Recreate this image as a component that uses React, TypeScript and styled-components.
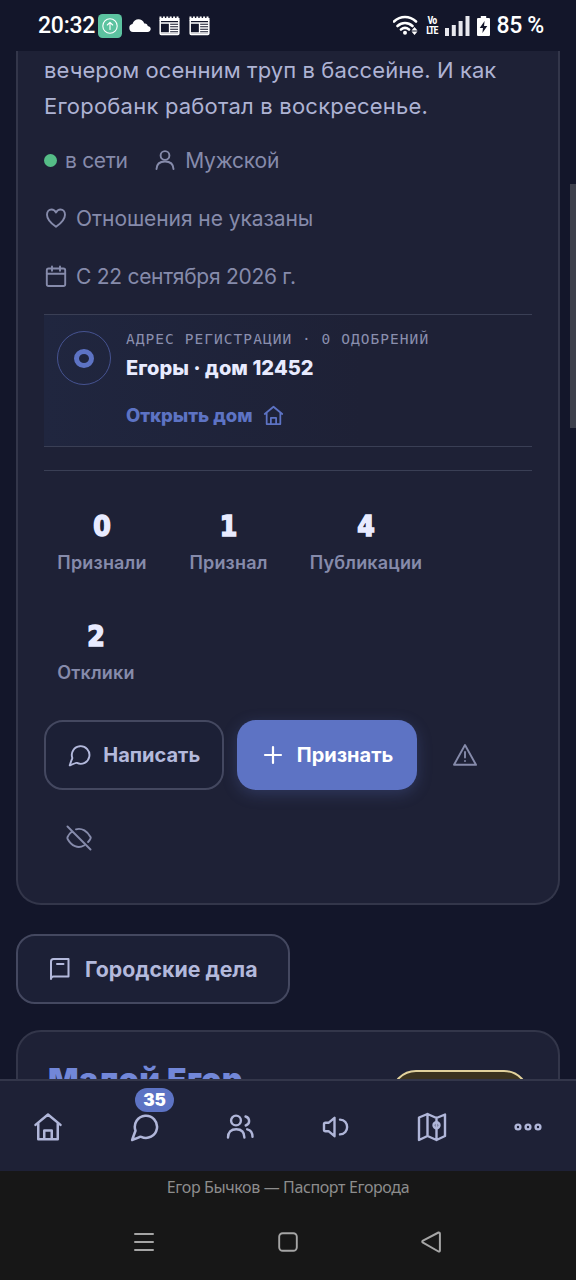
import React from 'react';
import styled, { createGlobalStyle } from 'styled-components';

const GlobalStyle = createGlobalStyle`
  * { box-sizing: border-box; }
  body { margin: 0; background: #13162a; font-family: Inter, "Noto Sans", sans-serif; }
  p, h2 { margin: 0; }
`;

const Screen = styled.div`
  width: 576px; height: 1280px; overflow: hidden;
  display: flex; flex-direction: column;
  background: #13162a; color: #aeb4d6;
  position: relative;
`;
const StatusBar = styled.header`
  height: 51px; flex: none; padding: 0 32px 0 38px;
  display: flex; align-items: center; justify-content: space-between;
  color: #fff; font: 500 23px/50px Roboto, sans-serif;
`;
const StatusGroup = styled.div<{ $gap: number }>`
  display: flex; align-items: center; gap: ${p => p.$gap}px; white-space: nowrap; height: 50px;
`;
const Clock = styled.span`letter-spacing: -0.25px; width: 58px;`;
const Percent = styled.span`letter-spacing: -0.3px;`;
const Feed = styled.main`
  flex: none; height: 1028px; padding: 0 16px; overflow: hidden;
  display: flex; flex-direction: column; align-items: flex-start;
`;
const ProfileCard = styled.section`
  width: 544px; height: 854px; flex: none;
  padding: 1px 26px 29px; background: #1e2136;
  border: 2px solid #33364a; border-top: 0; border-radius: 0 0 25px 25px;
`;
const Bio = styled.p`
  font-size: 22px; line-height: 36px; color: #aeb3d4; white-space: nowrap;
`;
const Line = styled.span<{ $ls: number }>`display: block; letter-spacing: ${p => p.$ls}px;`;
const MetaList = styled.div`
  margin-top: 22px; display: flex; flex-wrap: wrap; column-gap: 27px; row-gap: 30px;
`;
const MetaItem = styled.div<{ $gap?: number; $ls?: number }>`
  height: 28px; display: flex; align-items: center; gap: ${p => p.$gap ?? 8}px;
  font-size: 21px; letter-spacing: ${p => p.$ls ?? 0}px; color: #868bab; white-space: nowrap;
`;
const OnlineDot = styled.i`width: 13px; height: 13px; border-radius: 50%; background: #55bd87;`;
const Address = styled.section`
  margin-top: 24px; width: 488px; height: 133px; padding: 16px 13px;
  display: flex; gap: 15px;
  border-top: 1px solid #3a3f55; border-bottom: 1px solid #3a3f55;
  background: linear-gradient(90deg, #20263f, #1e2136 65%);
`;
const Seal = styled.div`
  width: 54px; height: 54px; flex: none; border: 1.500px solid #465391; border-radius: 50%;
  display: flex; align-items: center; justify-content: center;
`;
const SealRing = styled.i`width: 20px; height: 19px; border: 5px solid #5d73c4; border-radius: 50%;`;
const AddressText = styled.div`display: flex; flex-direction: column; white-space: nowrap;`;
const Caption = styled.span`
  font: 14.5px/16px "DejaVu Sans Mono", monospace; letter-spacing: 1.05px; color: #8a8fae;
`;
const AddressTitle = styled.strong`
  margin-top: 7px; font-size: 20px; line-height: 28px; font-weight: 800; color: #e8ebff; letter-spacing: 0.08px;
`;
const AddressLink = styled.a`
  margin-top: 19px; height: 28px; display: flex; align-items: center; gap: 11px;
  color: #5d73c4; font-size: 18.5px; font-weight: 850; letter-spacing: -0.05px;
`;
const Stats = styled.section`
  margin-top: 23px; padding-top: 31px; width: 488px; height: 226px;
  border-top: 1px solid #3a3f55; display: flex; flex-wrap: wrap; align-content: flex-start; gap: 16px;
`;
const Stat = styled.div<{ $w: number }>`
  width: ${p => p.$w}px; height: 94px; padding-top: 7px; text-align: center; white-space: nowrap;
`;
const StatValue = styled.strong`
  display: block; height: 36px; font: 700 28px/35px "DejaVu Sans Condensed", "DejaVu Sans", sans-serif; color: #e8ebff;
  -webkit-text-stroke: 1.5px #e8ebff;
`;
const StatLabel = styled.span`
  display: block; margin-top: 4px; font-size: 18px; line-height: 28px; font-weight: 600; color: #868bab;
  letter-spacing: 0.18px;
`;
const Actions = styled.div`
  margin-top: 24px; display: flex; flex-wrap: wrap; gap: 13px;
`;
const Button = styled.button<{ $primary?: boolean; $w: number; $gap?: number; $size?: number }>`
  width: ${p => p.$w}px; height: 70px; flex: none; padding: 0; border-radius: 19px;
  border: ${p => (p.$primary ? '0' : '2px solid #444860')};
  background: ${p => (p.$primary ? '#5d73c4' : '#1c2036')};
  box-shadow: ${p => (p.$primary ? '0 4px 15px rgba(93,115,196,.28)' : 'none')};
  color: ${p => (p.$primary ? '#fff' : '#b3b9dc')};
  display: flex; align-items: center; justify-content: center; gap: ${p => p.$gap ?? 12}px;
  font: 700 ${p => p.$size ?? 20}px/28px Inter, sans-serif; white-space: nowrap;
`;
const IconButton = styled.button`
  width: 70px; height: 70px; padding: 0; border: 0; background: none; color: #868bab;
  display: flex; align-items: center; justify-content: center;
`;
const CityRow = styled.div`margin-top: 29px; flex: none;`;
const PostCard = styled.article`
  margin-top: 26px; width: 544px; height: 180px; flex: none; padding: 25px 30px;
  border: 2px solid #33364a; border-radius: 25px; background: #1e2136;
  display: flex; justify-content: space-between; align-items: flex-start;
`;
const Author = styled.h2`
  margin-top: 3px; font-size: 32px; line-height: 40px; font-weight: 900; color: #7287d8; white-space: nowrap; letter-spacing: 0.35px;
`;
const Pill = styled.div`
  width: 138px; height: 60px; margin: 13px -1px 0 0; border: 2px solid #e2d29c; border-radius: 25px; background: #3b3320;
`;
const TabBar = styled.nav`
  height: 92px; flex: none; border-top: 2px solid #33364a; background: #1e2136;
  display: flex; color: #b0b6d9;
`;
const Tab = styled.div`
  position: relative; flex: 1; padding-top: 2px; display: flex; align-items: center; justify-content: center;
`;
const Badge = styled.span`
  position: absolute; left: 39px; top: 7px; width: 39px; height: 24px; border-radius: 12px;
  background: #5d73c4; color: #fff; font-size: 17px; line-height: 24px; font-weight: 900; text-align: center;
`;
const SystemBar = styled.footer`
  height: 109px; flex: none; background: #171717; color: #8d8d8d;
  display: flex; flex-direction: column; align-items: center;
`;
const PageTitle = styled.div`
  height: 34px; font: 16px/33px "Noto Sans", sans-serif; letter-spacing: -0.38px; white-space: nowrap;
`;
const SystemKeys = styled.div`
  width: 432px; height: 74px; display: flex; color: #a5a5a5;
`;
const Key = styled.div`flex: 1; display: flex; align-items: center; justify-content: center;`;
const ScrollThumb = styled.div`
  position: absolute; right: 0; top: 184px; width: 6px; height: 244px; background: #3d404c;
`;

const Svg = styled.svg`display: block; flex: none; fill: none; stroke: currentColor; stroke-linecap: round; stroke-linejoin: round;`;
type IconProps = { size: number; sw?: number };

const HomeIcon = ({ size, sw = 2 }: IconProps) => (
  <Svg width={size} height={size} viewBox="0 0 24 24" strokeWidth={sw}>
    <path d="M2 10.3 12 2l10 8.300M4.200 8.800V21.800h15.600V8.800M9 21.800v-7h6v7" />
  </Svg>
);
const ChatIcon = ({ size, sw = 2 }: IconProps) => (
  <Svg width={size} height={size} viewBox="0 0 24 24" strokeWidth={sw}>
    <path d="M4.500 14.500A9.200 9.200 0 1 1 9.300 19.800C8.500 19.500 8 19.700 7.300 20.100 5.500 21 4 21.500 1.800 22.300c.8-2.500 1.500-4.300 2.200-6.200.3-.7.600-1.100.5-1.600Z" />
  </Svg>
);
const PersonIcon = () => (
  <Svg width="20" height="22" viewBox="0 0 20 22" strokeWidth="1.900">
    <circle cx="10" cy="6.500" r="4.400" /><path d="M1.500 20c.2-5 3.500-7.500 8.500-7.500s8.300 2.500 8.500 7.500" />
  </Svg>
);
const HeartIcon = () => (
  <Svg width="24" height="24" viewBox="0 0 24 24" strokeWidth="1.900">
    <path d="M12 20.800C7 17.300 3 13.200 3 8.700 3 5.600 5 3.500 7.500 3.500c2 0 3.500 1.100 4.500 3 1-1.900 2.500-3 4.500-3C19 3.500 21 5.600 21 8.700c0 4.500-4 8.600-9 12.100Z" />
  </Svg>
);
const CalendarIcon = () => (
  <Svg width="24" height="24" viewBox="0 0 24 24" strokeWidth="1.900">
    <rect x="2.800" y="4.500" width="18.400" height="17.500" rx="1.800" /><path d="M2.800 9.800h18.400M8 2.500V6.800M16 2.500V6.800" />
  </Svg>
);
const PeopleIcon = () => (
  <Svg width="28" height="28" viewBox="0 0 28 28" strokeWidth="2.400">
    <circle cx="10" cy="7.500" r="4.900" />
    <path d="M2 24.500c0-5.500 3-8.300 8.200-8.300s8.200 2.800 8.200 8.300M19.500 3.500c4.800 1.500 4.800 7.500.2 9M21.200 16.300c3.600.8 5.300 3.300 5.300 7.500" />
  </Svg>
);
const SoundIcon = () => (
  <Svg width="28" height="28" viewBox="0 0 28 28" strokeWidth="2.400">
    <path d="M3.500 9.800H6.500L12.500 4.800v18.400L6.500 18.200H3.500Q2 18.200 2 16.700v-5.400Q2 9.800 3.500 9.800ZM18 6.600c9.500 0 9.500 14.800 0 14.800" />
  </Svg>
);
const MapIcon = () => (
  <Svg width="30" height="30" viewBox="0 0 30 30" strokeWidth="2.400">
    <path d="M2 5.500 10.500 2 19.500 6 28 2.500V24L19.500 28 10.500 24 2 28ZM10.500 2v22M19.500 6v22" />
    <circle cx="19.500" cy="13.200" r="3" />
  </Svg>
);
const WarningIcon = () => (
  <Svg width="26" height="26" viewBox="0 0 26 26" strokeWidth="1.900">
    <path d="M13 3 24 22.800H2ZM13 10v5.500M13 19v.1" />
  </Svg>
);
const EyeOffIcon = () => (
  <Svg width="26" height="26" viewBox="0 0 26 26" strokeWidth="1.900">
    <path d="m1.500 1.500 23 23M10 4.300C16 2.500 21.500 6.500 24.500 12c.4.700.2 1.400-.2 2-.5 1-1.300 2-2.200 3M6 6.500c-2 1.500-3.500 3.500-4.400 5.500-.3.700-.3 1.300 0 2C5.500 21 12 24 18 20.500" />
  </Svg>
);
const BookIcon = () => (
  <Svg width="22" height="24" viewBox="0 0 22 24" strokeWidth="2">
    <path d="M3 22V4.500C3 2.800 3.800 2 5.500 2H20.500v17.500H5.500C4 19.500 3 20.200 3 22M9 7h6.500" />
  </Svg>
);

const AppBadgeIcon = () => (
  <Svg width="24" height="24" viewBox="0 0 24 24" strokeWidth="1.100">
    <rect width="24" height="24" rx="4.500" fill="#5cc3a0" stroke="none" />
    <circle cx="12" cy="12" r="7.200" /><path d="M12 15.500v-7M9.300 11 12 8.300l2.700 2.700" />
  </Svg>
);
const CloudIcon = () => (
  <Svg width="22" height="14" viewBox="0 0 22 14">
    <path fill="currentColor" stroke="none" d="M4 13A4 4 0 0 1 3.500 5.100C5-.8 13-1.500 15.300 4.500 17 4 18.600 5.400 18.700 7 23 7.500 22.500 13 18.500 13Z" />
  </Svg>
);
const NewsIcon = () => (
  <Svg width="21" height="20" viewBox="0 0 21 20" strokeWidth="1.500">
    <path strokeLinecap="butt" strokeWidth="2" strokeDasharray="2 1.400" d="M.5 1.500h20" />
    <path fill="currentColor" stroke="none" d="M.5 2h20v3H.5Z" />
    <rect x="1.200" y="4" width="18.600" height="14.500" rx="1" />
    <path d="M2 7h17M11 9.500h8M11 12h8M11 14.500h8M2 17h17M10.500 7v9" strokeWidth="1.300" />
  </Svg>
);
const WifiIcon = () => (
  <Svg width="25" height="21" viewBox="0 0 25 21" strokeWidth="2.600" strokeLinecap="butt">
    <path d="M1 6.500C7.500.5 16.500.5 23 6.500M4.500 11c4.500-4 10.500-4 15 0M8 14.500c2.500-2 5.500-2 8 0" />
    <circle cx="12" cy="17.700" r="2" fill="currentColor" stroke="none" />
    <path fill="currentColor" stroke="none" d="m21.500 12 3 3.500h-6ZM21.500 20l3-3.500h-6Z" />
  </Svg>
);
const Volte = styled.span`
  width: 14px; height: 20px; display: flex; flex-direction: column; align-items: center;
  font: 700 10px/10px "Roboto Condensed", Roboto, sans-serif; letter-spacing: -0.9px;
`;
const SignalIcon = () => (
  <Svg width="25" height="20" viewBox="0 0 25 20">
    <path fill="#e8e8ee" stroke="none" d="M0 12h4v8H0ZM6.800 9h4v11h-4ZM13.600 5h4v15h-4ZM20.500 0h4v20h-4Z" />
  </Svg>
);
const BatteryIcon = () => (
  <Svg width="13" height="20" viewBox="0 0 12 20" preserveAspectRatio="none">
    <path fill="currentColor" stroke="none" d="M3.500 0h5v2H11q1 0 1 1v16q0 1-1 1H1q-1 0-1-1V3q0-1 1-1h2.500Z" />
    <path fill="#13162a" stroke="none" d="M7 5 2.500 12H5.500L5 17 9.500 10H6.500Z" />
  </Svg>
);

export default function App() {
  return (
    <Screen>
      <GlobalStyle />
      <StatusBar>
        <StatusGroup $gap={6.500}>
          <StatusGroup $gap={2}><Clock>20:32</Clock><AppBadgeIcon /></StatusGroup>
          <StatusGroup $gap={8.500}><CloudIcon /><NewsIcon /><NewsIcon /></StatusGroup>
        </StatusGroup>
        <StatusGroup $gap={6.500}>
          <WifiIcon /><Volte><span>Vo</span><span>LTE</span></Volte><SignalIcon /><BatteryIcon /><Percent>85 %</Percent>
        </StatusGroup>
      </StatusBar>
      <Feed>
        <ProfileCard>
          <Bio>
            <Line $ls={0.09}>вечером осенним труп в бассейне. И как</Line>
            <Line $ls={0.21}>Егоробанк работал в воскресенье.</Line>
          </Bio>
          <MetaList>
            <MetaItem $ls={-0.3}><OnlineDot />в сети</MetaItem>
            <MetaItem $gap={10.500} $ls={-0.2}><PersonIcon />Мужской</MetaItem>
            <MetaItem $ls={-0.07}><HeartIcon />Отношения не указаны</MetaItem>
            <MetaItem $ls={-0.27}><CalendarIcon />С 22 сентября 2026 г.</MetaItem>
          </MetaList>
          <Address>
            <Seal><SealRing /></Seal>
            <AddressText>
              <Caption>АДРЕС РЕГИСТРАЦИИ · 0 ОДОБРЕНИЙ</Caption>
              <AddressTitle>Егоры · дом 12452</AddressTitle>
              <AddressLink>Открыть дом <HomeIcon size={21} sw={2} /></AddressLink>
            </AddressText>
          </Address>
          <Stats>
            <Stat $w={116}><StatValue>0</StatValue><StatLabel>Признали</StatLabel></Stat>
            <Stat $w={105}><StatValue>1</StatValue><StatLabel>Признал</StatLabel></Stat>
            <Stat $w={138}><StatValue>4</StatValue><StatLabel>Публикации</StatLabel></Stat>
            <Stat $w={104}><StatValue>2</StatValue><StatLabel>Отклики</StatLabel></Stat>
          </Stats>
          <Actions>
            <Button $w={180} $gap={12.500}><ChatIcon size={23} sw={2} />Написать</Button>
            <Button $w={180} $primary>
              <Svg width="24" height="24" viewBox="0 0 24 24" strokeWidth="2.200"><path d="M12 4v16M4 12h16" /></Svg>
              Признать
            </Button>
            <IconButton><WarningIcon /></IconButton>
            <IconButton><EyeOffIcon /></IconButton>
          </Actions>
        </ProfileCard>
        <CityRow><Button $w={273.500} $gap={15} $size={21.300}><BookIcon />Городские дела</Button></CityRow>
        <PostCard><Author>Малой Егор</Author><Pill /></PostCard>
      </Feed>
      <TabBar>
        <Tab><HomeIcon size={30} sw={2} /></Tab>
        <Tab><ChatIcon size={29} sw={2.100} /><Badge>35</Badge></Tab>
        <Tab><PeopleIcon /></Tab>
        <Tab><SoundIcon /></Tab>
        <Tab><MapIcon /></Tab>
        <Tab>
          <Svg width="28" height="8" viewBox="0 0 28 8" strokeWidth="2.400">
            <circle cx="4" cy="4" r="2.400" /><circle cx="14" cy="4" r="2.400" /><circle cx="24" cy="4" r="2.400" />
          </Svg>
        </Tab>
      </TabBar>
      <SystemBar>
        <PageTitle>Егор Бычков — Паспорт Егорода</PageTitle>
        <SystemKeys>
          <Key><Svg width="20" height="20" viewBox="0 0 20 20" strokeWidth="2"><path d="M1 2h18M1 10h18M1 18h18" /></Svg></Key>
          <Key><Svg width="20" height="20" viewBox="0 0 20 20" strokeWidth="1.900"><rect x="1.200" y="1.200" width="17.600" height="17.600" rx="3.500" /></Svg></Key>
          <Key><Svg width="22" height="22" viewBox="0 0 22 22" strokeWidth="2"><path d="M17.500 1.500 2 9.700q-1.500 1 0 2L17.500 20.500q1.400.3 1.400-1V2.700q0-1.500-1.400-1.200Z" /></Svg></Key>
        </SystemKeys>
      </SystemBar>
      <ScrollThumb />
    </Screen>
  );
}
